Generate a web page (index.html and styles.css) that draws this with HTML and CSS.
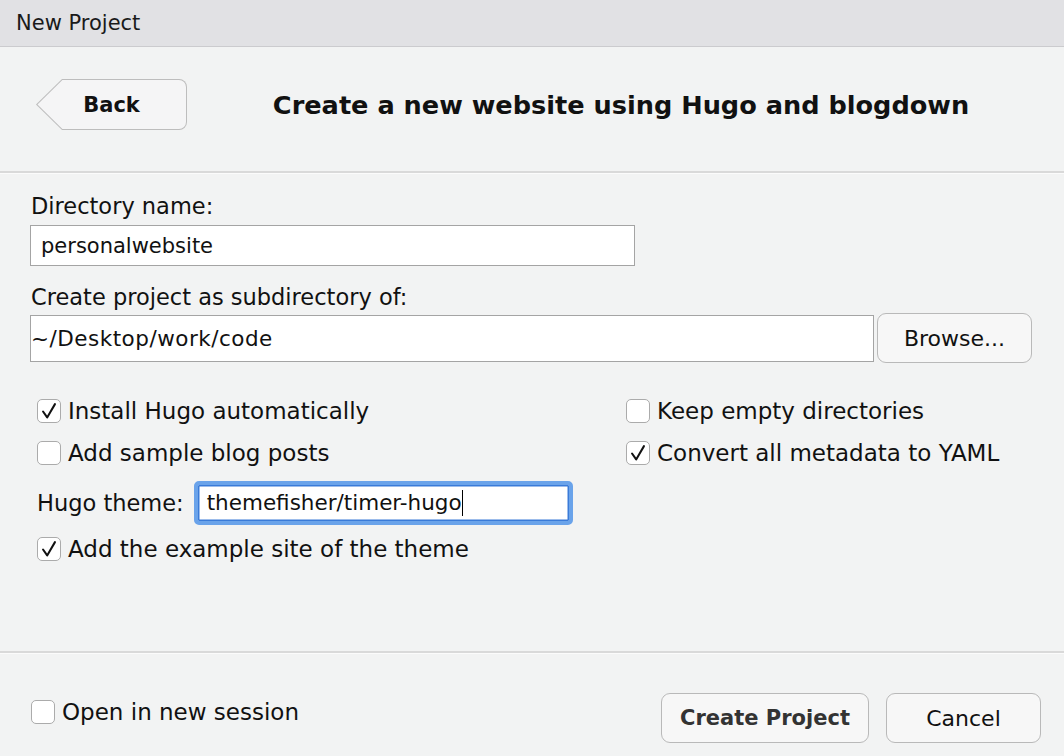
FILE: index.html
```html
<!DOCTYPE html>
<html>
<head>
<meta charset="utf-8">
<link rel="stylesheet" href="styles.css">
</head>
<body>
<div class="window">
  <div class="titlebar">New Project</div>
  <div class="header">
    <div class="back"><div class="back-inner">Back</div></div>
    <div class="heading">Create a new website using Hugo and blogdown</div>
  </div>
  <div class="sep"></div>
  <div class="form">
    <div class="label">Directory name:</div>
    <div class="input input-name">personalwebsite</div>
    <div class="label label-gap">Create project as subdirectory of:</div>
    <div class="path-row">
      <div class="input input-path">~/Desktop/work/code</div>
      <div class="btn btn-browse">Browse...</div>
    </div>
    <div class="options">
      <div class="check"><span class="box"><svg viewBox="0 0 24 24" class="tick"><path d="M5.5 12.5 L10 19 L18.5 4.5"/></svg></span>Install Hugo automatically</div>
      <div class="check"><span class="box"></span>Keep empty directories</div>
      <div class="check"><span class="box"></span>Add sample blog posts</div>
      <div class="check"><span class="box"><svg viewBox="0 0 24 24" class="tick"><path d="M5.5 12.5 L10 19 L18.5 4.5"/></svg></span>Convert all metadata to YAML</div>
    </div>
    <div class="theme-row">
      <span class="theme-label">Hugo theme:</span>
      <div class="focus-input"><span class="caret">themefisher/timer-hugo</span></div>
    </div>
    <div class="check example"><span class="box"><svg viewBox="0 0 24 24" class="tick"><path d="M5.5 12.5 L10 19 L18.5 4.5"/></svg></span>Add the example site of the theme</div>
  </div>
  <div class="sep"></div>
  <div class="footer">
    <div class="check session"><span class="box"></span>Open in new session</div>
    <div class="actions">
      <div class="btn btn-create">Create Project</div>
      <div class="btn btn-cancel">Cancel</div>
    </div>
  </div>
</div>
</body>
</html>
```
FILE: styles.css
```css
html, body {
  margin: 0;
  padding: 0;
}
body {
  width: 1064px;
  height: 756px;
  overflow: hidden;
  background: #f2f3f3;
  font-family: "DejaVu Sans", "Noto Sans", sans-serif;
  color: #111;
}
.titlebar {
  height: 46px;
  background: #e1e1e4;
  border-bottom: 1px solid #cbcbce;
  padding-left: 16px;
  font-size: 21px;
  line-height: 47px;
  color: #1a1a1a;
}
.header {
  height: 124px;
  box-sizing: border-box;
  padding: 32px 0 0 36px;
  display: flex;
  align-items: flex-start;
}
.back {
  width: 151px;
  height: 51px;
  box-sizing: border-box;
  padding: 1px;
  background: #bdbdbd;
  border-radius: 0 8px 8px 0;
  clip-path: polygon(26px 0, 100% 0, 100% 100%, 26px 100%, 0 50%);
}
.back-inner {
  height: 100%;
  background: #f5f5f6;
  border-radius: 0 7px 7px 0;
  clip-path: polygon(25.4px 0, 100% 0, 100% 100%, 25.4px 100%, 0.5px 50%);
  display: flex;
  align-items: center;
  justify-content: center;
  font-weight: bold;
  font-size: 21px;
  color: #111;
}
.heading {
  flex: 1;
  height: 51px;
  line-height: 52px;
  text-align: center;
  padding-right: 9px;
  font-weight: bold;
  font-size: 25.6px;
  color: #111;
}
.sep {
  height: 2px;
  background: #d9d9d9;
  border-bottom: 1px solid #fbfbfb;
}
.form {
  height: 477px;
  box-sizing: border-box;
  padding: 18px 0 0 30px;
}
.label {
  font-size: 22.5px;
  line-height: 28px;
  padding-left: 1px;
}
.label-gap {
  margin-top: 17px;
}
.input {
  box-sizing: border-box;
  background: #fff;
  border: 1.5px solid #a4a4a4;
  font-size: 21px;
  padding-left: 10px;
  display: flex;
  align-items: center;
}
.input-name {
  width: 605px;
  height: 41px;
  margin-top: 5px;
}
.path-row {
  display: flex;
  align-items: center;
  gap: 3px;
  height: 50px;
  margin-top: 2px;
}
.input-path {
  width: 844px;
  height: 47px;
  padding-left: 0;
  font-size: 21.5px;
  letter-spacing: 0.5px;
}
.btn {
  box-sizing: border-box;
  border: 1.5px solid #b9b9b9;
  border-radius: 9px;
  background: #f7f7f7;
  display: flex;
  align-items: center;
  justify-content: center;
  font-size: 22px;
  color: #111;
}
.btn-browse {
  width: 155px;
  height: 50px;
}
.options {
  display: grid;
  grid-template-columns: 589px auto;
  row-gap: 14px;
  margin: 34px 0 0 7px;
}
.check {
  display: flex;
  align-items: center;
  gap: 7px;
  height: 28px;
  font-size: 23px;
}
.box {
  width: 24px;
  height: 24px;
  box-sizing: border-box;
  border: 1.5px solid #ababab;
  border-radius: 5px;
  background: #fff;
  display: flex;
  align-items: center;
  justify-content: center;
  flex: none;
}
.tick {
  width: 22px;
  height: 22px;
}
.tick path {
  fill: none;
  stroke: #111;
  stroke-width: 2.2;
  stroke-linecap: round;
  stroke-linejoin: round;
}
.theme-row {
  display: flex;
  align-items: center;
  height: 44px;
  margin: 14px 0 0 7px;
  gap: 10px;
}
.theme-label {
  font-size: 22.5px;
}
.focus-input {
  width: 379px;
  height: 44px;
  box-sizing: border-box;
  border: 4px solid #6aa3ea;
  box-shadow: inset 0 0 0 1.5px #3a7bd8;
  border-radius: 5px;
  background: #fff;
  display: flex;
  align-items: center;
  padding-left: 9px;
  font-size: 21.5px;
}
.caret {
  border-right: 1.5px solid #000;
  line-height: 26px;
}
.example {
  margin: 10px 0 0 7px;
}
.footer {
  display: flex;
  justify-content: space-between;
  align-items: flex-start;
  padding: 39px 23px 0 31px;
}
.session {
  margin-top: 5px;
}
.actions {
  display: flex;
  gap: 17px;
}
.btn-create {
  width: 208px;
  height: 50px;
  font-weight: bold;
  font-size: 21px;
  color: #333;
}
.btn-cancel {
  width: 155px;
  height: 50px;
}
```
